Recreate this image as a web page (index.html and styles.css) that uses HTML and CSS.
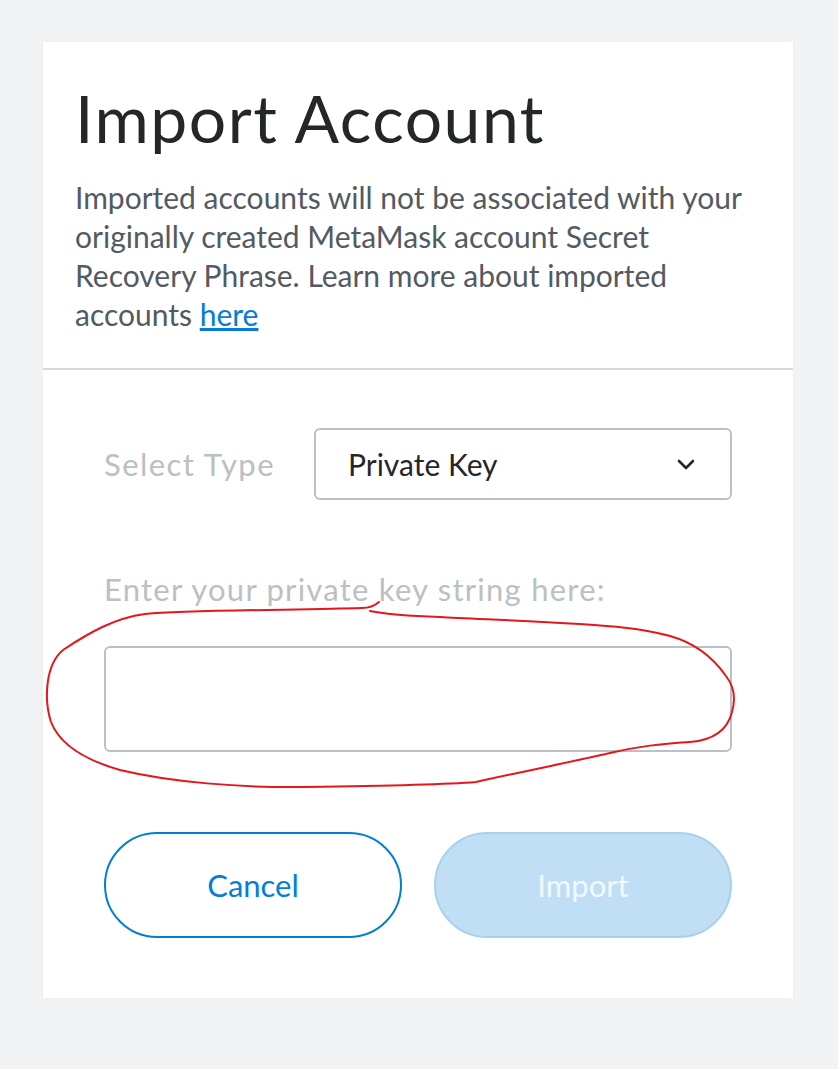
FILE: index.html
```html
<!DOCTYPE html>
<html lang="en">
<head>
<meta charset="utf-8">
<title>Import Account</title>
<link rel="stylesheet" href="styles.css">
</head>
<body>
<div class="page">
  <div class="card">
    <div class="card-header">
      <h1 class="title">Import Account</h1>
      <p class="desc">Imported accounts will not be associated with your originally created MetaMask account Secret Recovery Phrase. Learn more about imported accounts <a class="link" href="#">here</a></p>
    </div>
    <div class="form">
      <div class="select-row">
        <span class="label label-type">Select Type</span>
        <div class="select">
          <span class="select-value">Private Key</span>
          <svg class="chevron" width="18" height="11" viewBox="0 0 18 11"><path d="M2 2 L9 9 L16 2" fill="none" stroke="#24272a" stroke-width="2.6" stroke-linecap="round" stroke-linejoin="round"/></svg>
        </div>
      </div>
      <div class="key-label label">Enter your private key string here:</div>
      <div class="key-input"></div>
      <div class="buttons">
        <button class="btn btn-cancel">Cancel</button>
        <button class="btn btn-import">Import</button>
      </div>
    </div>
  </div>
</div>
<svg class="annotation" width="838" height="1069" viewBox="0 0 838 1069">
  <path d="M379,602 Q372,608 362,608 C300,610 190,610 145,614 C115,618 90,632 63,650 C45,665 44,700 51,722 C60,745 85,760 120,770 C170,782 240,788 306,787 C380,786 440,785 476,782 C530,770 580,760 610,753 C640,746 660,744 690,742 C715,740 728,728 732,712 C736,698 733,685 726,676 C712,656 695,643 670,636 C640,628 610,626 580,624 C520,620 470,619 440,617 C410,616 385,614 370,611" fill="none" stroke="#e3171c" stroke-width="2" stroke-linecap="round" stroke-linejoin="round"/>
</svg>
</body>
</html>
```
FILE: styles.css
```css
html, body {
  margin: 0;
  padding: 0;
}
body {
  background: #f2f3f4;
  font-family: "Lato", "Noto Sans", sans-serif;
  position: relative;
  width: 838px;
  height: 1069px;
  overflow: hidden;
}
.page {
  padding: 42px 0 0 43px;
}
.card {
  width: 750px;
  height: 956px;
  background: #ffffff;
  box-shadow: 0 0 4px rgba(0, 0, 0, 0.04);
}
.card-header {
  padding: 38px 32px 34px 32px;
  border-bottom: 2px solid #d6d9dc;
}
.title {
  margin: 0;
  font-size: 66px;
  line-height: 76px;
  letter-spacing: 1.5px;
  font-weight: 400;
  color: #24272a;
}
.desc {
  margin: 22px 0 0 0;
  font-size: 30px;
  line-height: 39px;
  color: #535a61;
  max-width: 672px;
}
.link {
  color: #037dd6;
  text-decoration: underline;
}
.form {
  padding: 58px 61px 0 61px;
}
.select-row {
  display: flex;
  align-items: center;
  height: 72px;
}
.label {
  font-size: 31px;
  color: #bbc0c5;
  letter-spacing: 1.25px;
}
.label-type {
  width: 210px;
  letter-spacing: 1.45px;
}
.select {
  box-sizing: border-box;
  width: 418px;
  height: 72px;
  border: 2px solid #bbc0c5;
  border-radius: 6px;
  display: flex;
  align-items: center;
  justify-content: space-between;
  padding: 0 35px 0 32px;
}
.select-value {
  font-size: 30px;
  color: #24272a;
}
.chevron {
  display: block;
}
.key-label {
  margin-top: 71px;
  line-height: 36px;
}
.key-input {
  box-sizing: border-box;
  margin-top: 39px;
  height: 106px;
  border: 2px solid #bbc0c5;
  border-radius: 6px;
}
.buttons {
  display: flex;
  gap: 32px;
  margin-top: 80px;
}
.btn {
  box-sizing: border-box;
  width: 298px;
  height: 106px;
  border-radius: 53px;
  font-family: inherit;
  font-size: 31px;
  padding: 0;
}
.btn-cancel {
  background: #ffffff;
  border: 2px solid #037dd6;
  color: #037dd6;
}
.btn-import {
  background: #c0dff5;
  border: 2px solid #a6d1f0;
  color: #f2f8fd;
}
.annotation {
  position: absolute;
  left: 0;
  top: 0;
  pointer-events: none;
}
```
